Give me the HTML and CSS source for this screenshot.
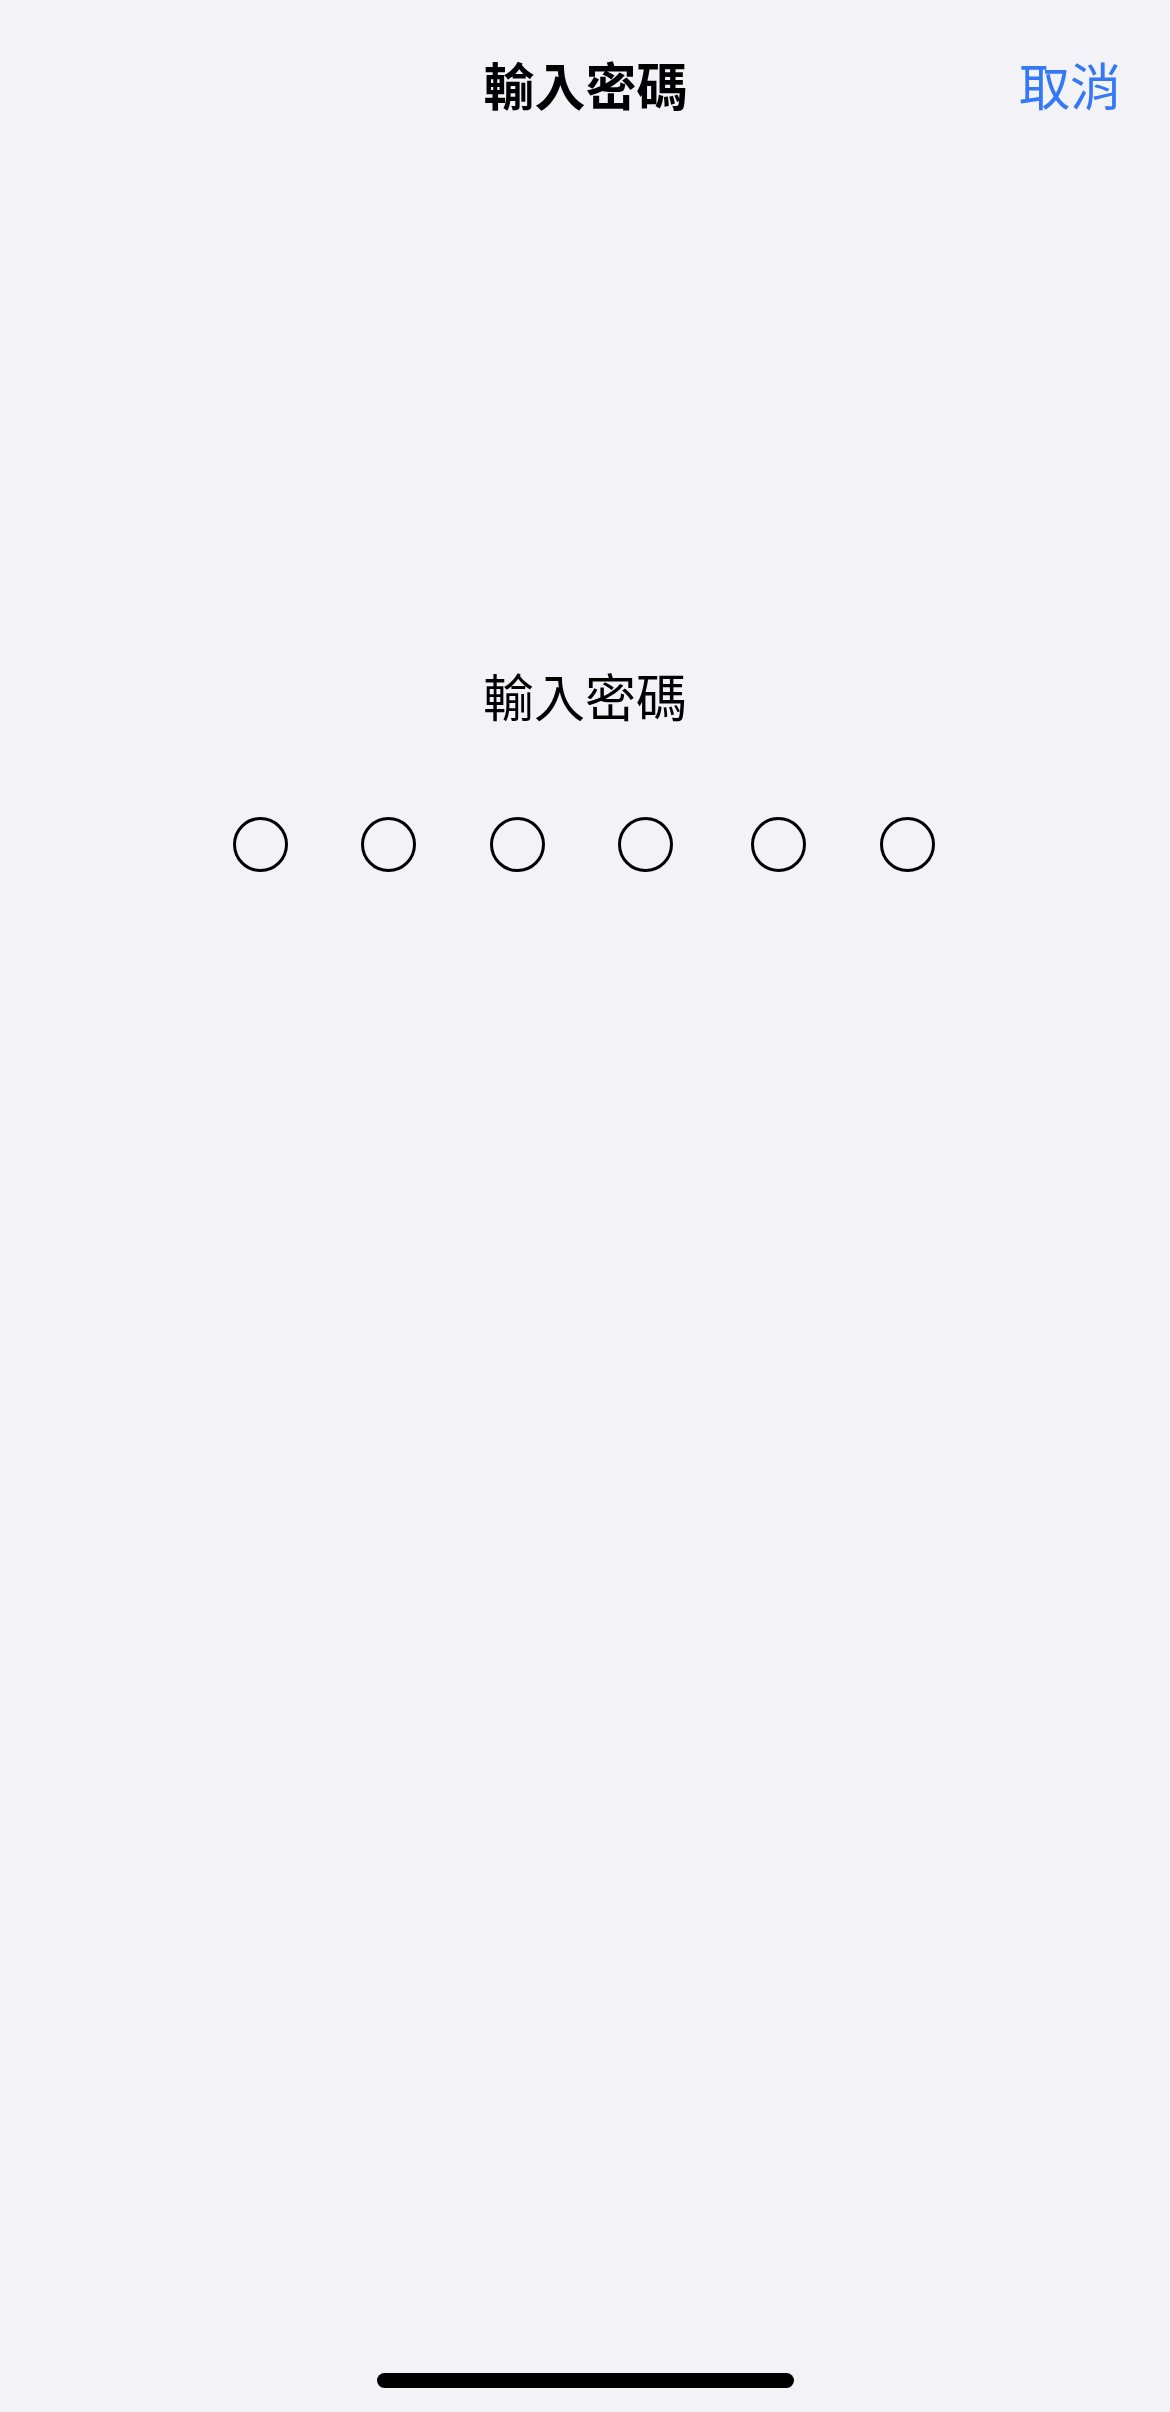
FILE: index.html
```html
<!DOCTYPE html>
<html lang="zh-Hant">
<head>
<meta charset="utf-8">
<title>輸入密碼</title>
<link rel="stylesheet" href="styles.css">
</head>
<body>
<div class="page">
  <header class="nav">
    <div class="nav-side"></div>
    <h1 class="nav-title">輸入密碼</h1>
    <div class="nav-side nav-right"><span class="cancel">取消</span></div>
  </header>
  <main class="entry">
    <p class="prompt">輸入密碼</p>
    <div class="dots">
      <span class="dot"></span>
      <span class="dot"></span>
      <span class="dot"></span>
      <span class="dot"></span>
      <span class="dot dot-split"></span>
      <span class="dot"></span>
    </div>
  </main>
  <div class="home-indicator"></div>
</div>
</body>
</html>
```
FILE: styles.css
```css
html, body {
  margin: 0;
  padding: 0;
  background: #F2F2F7;
}
.page {
  width: 1170px;
  height: 2412px;
  display: flex;
  flex-direction: column;
  align-items: center;
  font-family: "Noto Sans CJK TC", "Noto Sans CJK SC", sans-serif;
  color: #000;
}
.nav {
  width: 100%;
  box-sizing: border-box;
  margin-top: 59px;
  padding: 0 49px 0 50px;
  display: grid;
  grid-template-columns: 1fr auto 1fr;
  align-items: center;
  height: 51px;
}
.nav-title {
  margin: 0;
  font-size: 51px;
  line-height: 51px;
  font-weight: 700;
}
.nav-right {
  display: flex;
  justify-content: flex-end;
}
.cancel {
  font-size: 51px;
  line-height: 51px;
  color: #3478F6;
}
.entry {
  margin-top: 560px;
  display: flex;
  flex-direction: column;
  align-items: center;
}
.prompt {
  margin: 0;
  font-size: 51px;
  line-height: 51px;
  font-weight: 400;
}
.dots {
  margin-top: 96px;
  margin-right: 3px;
  display: flex;
  gap: 73.5px;
}
.dot {
  width: 55px;
  height: 55px;
  box-sizing: border-box;
  border: 3px solid #000;
  border-radius: 50%;
}
.dot-split {
  margin-left: 4.5px;
}
.home-indicator {
  margin-top: auto;
  margin-bottom: 24px;
  width: 417px;
  height: 15px;
  border-radius: 8px;
  background: #000;
}
```
